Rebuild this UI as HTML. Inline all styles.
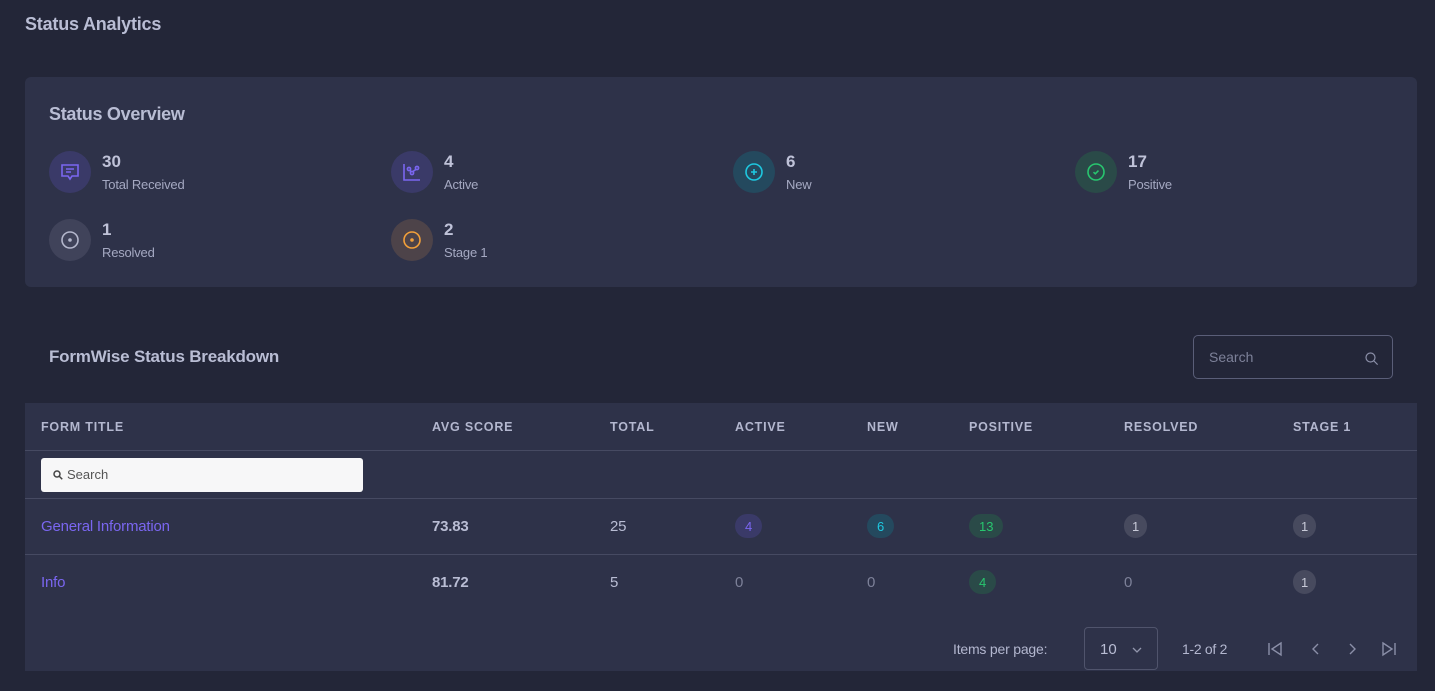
<!DOCTYPE html>
<html><head><meta charset="utf-8"><style>
*{box-sizing:border-box;margin:0;padding:0}
body{width:1435px;height:691px;background:#232638;font-family:"Liberation Sans",sans-serif;color:#b9bdd4;position:relative;overflow:hidden}
.a{position:absolute}
.card{left:25px;top:77px;width:1392px;height:210px;background:#2e3249;border-radius:6px}
.ic{width:42px;height:42px;border-radius:50%;display:flex;align-items:center;justify-content:center}
.num{font-size:17px;font-weight:bold;color:#bfc2d8}
.lbl{font-size:13px;color:#a5a9c2;letter-spacing:-0.2px}
.tbl{left:25px;top:403px;width:1392px;height:268px;background:#2e3249}
.th{font-size:12.5px;font-weight:bold;letter-spacing:0.8px;color:#b3b7cf;top:17px}
.line{left:0;width:1392px;height:1px;background:#464a62}
.cell{font-size:15px;letter-spacing:-0.2px}
.b{height:24px;border-radius:12px;font-size:13px;display:flex;align-items:center;justify-content:center;padding:0 10px}
.g{padding:0 8px}
</style></head><body>
<div class="a" style="left:25px;top:14px;font-size:18px;font-weight:bold;color:#b9bdd4;letter-spacing:-0.2px">Status Analytics</div>
<div class="a card">
 <div class="a" style="left:24px;top:27px;font-size:18px;font-weight:bold;color:#b9bdd4;letter-spacing:-0.3px">Status Overview</div>
 <div class="a ic" style="left:24px;top:74px;background:#3a3a68"><svg width="24" height="24" viewBox="0 0 24 24" fill="none" stroke="#7a66f0" stroke-width="1.6"><path d="M4 5h16v11h-6l-2 3-2-3H4z"/><path d="M8 9h8M8 12h5"/></svg></div>
 <div class="a num" style="left:77px;top:75px">30</div><div class="a lbl" style="left:77px;top:100px">Total Received</div>
 <div class="a ic" style="left:366px;top:74px;background:#3a3a68"><svg width="24" height="24" viewBox="0 0 24 24" fill="none" stroke="#7a66f0" stroke-width="1.6"><path d="M4 4v16h16"/><circle cx="9" cy="9" r="1.6"/><circle cx="12" cy="13" r="1.6"/><circle cx="17" cy="8" r="1.6"/><path d="M10 10.5l1.2 1.2M13 11.5l3-2.2"/></svg></div>
 <div class="a num" style="left:419px;top:75px">4</div><div class="a lbl" style="left:419px;top:100px">Active</div>
 <div class="a ic" style="left:708px;top:74px;background:#24495e"><svg width="24" height="24" viewBox="0 0 24 24" fill="none" stroke="#1ec8e0" stroke-width="1.6"><circle cx="12" cy="12" r="8"/><path d="M12 9v6M9 12h6"/></svg></div>
 <div class="a num" style="left:761px;top:75px">6</div><div class="a lbl" style="left:761px;top:100px">New</div>
 <div class="a ic" style="left:1050px;top:74px;background:#2a4a48"><svg width="24" height="24" viewBox="0 0 24 24" fill="none" stroke="#28c66f" stroke-width="1.6"><circle cx="12" cy="12" r="8"/><path d="M9.5 12.2l1.8 1.6 3.2-3.2"/></svg></div>
 <div class="a num" style="left:1103px;top:75px">17</div><div class="a lbl" style="left:1103px;top:100px">Positive</div>
 <div class="a ic" style="left:24px;top:142px;background:#40435a"><svg width="24" height="24" viewBox="0 0 24 24" fill="none" stroke="#b4b7cc" stroke-width="1.6"><circle cx="12" cy="12" r="8"/><circle cx="12" cy="12" r="1" fill="#b4b7cc"/></svg></div>
 <div class="a num" style="left:77px;top:143px">1</div><div class="a lbl" style="left:77px;top:168px">Resolved</div>
 <div class="a ic" style="left:366px;top:142px;background:#4d4349"><svg width="24" height="24" viewBox="0 0 24 24" fill="none" stroke="#f3a03a" stroke-width="1.6"><circle cx="12" cy="12" r="8"/><circle cx="12" cy="12" r="1" fill="#f3a03a"/></svg></div>
 <div class="a num" style="left:419px;top:143px">2</div><div class="a lbl" style="left:419px;top:168px">Stage 1</div>
</div>
<div class="a" style="left:49px;top:347px;font-size:17px;font-weight:bold;color:#b9bdd4;letter-spacing:-0.2px">FormWise Status Breakdown</div>
<div class="a" style="left:1193px;top:335px;width:200px;height:44px;border:1px solid #5a5e78;border-radius:5px">
 <div class="a" style="left:15px;top:13px;font-size:14px;color:#7d8199">Search</div>
 <svg class="a" style="left:169px;top:14px" width="18" height="18" viewBox="0 0 24 24" fill="none" stroke="#8b8fa8" stroke-width="1.6"><circle cx="10" cy="10" r="6"/><path d="M14.5 14.5l5 5"/></svg>
</div>
<div class="a tbl">
 <div class="a th" style="left:16px">FORM TITLE</div>
 <div class="a th" style="left:407px">AVG SCORE</div>
 <div class="a th" style="left:585px">TOTAL</div>
 <div class="a th" style="left:710px">ACTIVE</div>
 <div class="a th" style="left:842px">NEW</div>
 <div class="a th" style="left:944px">POSITIVE</div>
 <div class="a th" style="left:1099px">RESOLVED</div>
 <div class="a th" style="left:1268px">STAGE 1</div>
 <div class="a line" style="top:47px"></div>
 <div class="a" style="left:16px;top:55px;width:322px;height:34px;background:#f7f7f8;border-radius:3px;font-size:13px;color:#555;padding:9px 0 0 26px">Search
  <svg class="a" style="left:11px;top:11px" width="12" height="12" viewBox="0 0 24 24" fill="none" stroke="#444" stroke-width="3"><circle cx="10" cy="10" r="6"/><path d="M14.5 14.5l6 6"/></svg></div>
 <div class="a line" style="top:95px"></div>
 <div class="a cell" style="left:16px;top:115px;color:#7a66f0">General Information</div>
 <div class="a cell" style="left:407px;top:115px;font-weight:bold">73.83</div>
 <div class="a cell" style="left:585px;top:115px">25</div>
 <div class="a b" style="left:710px;top:111px;background:#3a3a68;color:#7a66f0">4</div>
 <div class="a b" style="left:842px;top:111px;background:#24495e;color:#1ec8e0">6</div>
 <div class="a b" style="left:944px;top:111px;background:#2a4a48;color:#28c66f">13</div>
 <div class="a b g" style="left:1099px;top:111px;background:#474a5e;color:#c8cad8">1</div>
 <div class="a b g" style="left:1268px;top:111px;background:#474a5e;color:#c8cad8">1</div>
 <div class="a line" style="top:151px"></div>
 <div class="a cell" style="left:16px;top:171px;color:#7a66f0">Info</div>
 <div class="a cell" style="left:407px;top:171px;font-weight:bold">81.72</div>
 <div class="a cell" style="left:585px;top:171px">5</div>
 <div class="a cell" style="left:710px;top:171px;color:#7d8199">0</div>
 <div class="a cell" style="left:842px;top:171px;color:#7d8199">0</div>
 <div class="a b" style="left:944px;top:167px;background:#2a4a48;color:#28c66f">4</div>
 <div class="a cell" style="left:1099px;top:171px;color:#7d8199">0</div>
 <div class="a b g" style="left:1268px;top:167px;background:#474a5e;color:#c8cad8">1</div>
 <div class="a" style="left:928px;top:238px;font-size:14px;color:#b3b7cf;letter-spacing:-0.2px">Items per page:</div>
 <div class="a" style="left:1059px;top:224px;width:74px;height:43px;border:1px solid #50546c;border-radius:4px">
  <div class="a" style="left:15px;top:13px;font-size:15px">10</div>
  <svg class="a" style="left:46px;top:17px" width="12" height="10" viewBox="0 0 12 10" fill="none" stroke="#9296ad" stroke-width="1.3"><path d="M2 3l4 4 4-4"/></svg>
 </div>
 <div class="a" style="left:1157px;top:238px;font-size:14px;color:#b3b7cf;letter-spacing:-0.3px">1-2 of 2</div>
 <svg class="a" style="left:1242px;top:237px" width="130" height="18" viewBox="0 0 130 18" fill="none" stroke="#8b8fa8" stroke-width="1.4"><path d="M2 3v12M14 3l-9 6 9 6z"/><path d="M51 4l-5 5 5 5"/><path d="M83 4l5 5-5 5"/><path d="M116 3l9 6-9 6zM128 3v12"/></svg>
</div>
</body></html>
